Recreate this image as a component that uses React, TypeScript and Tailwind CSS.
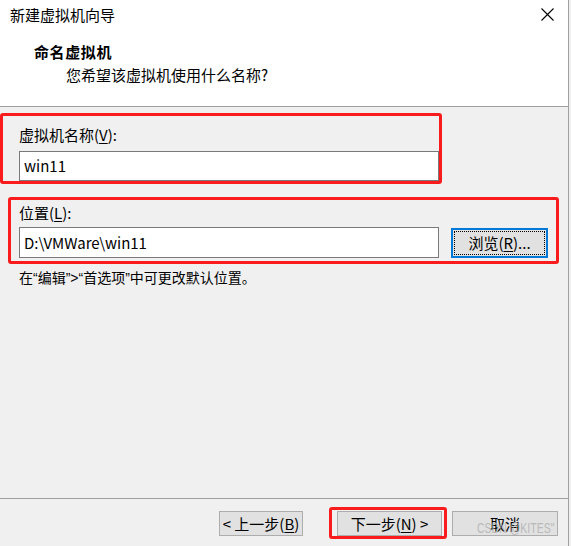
import React from 'react';

function Mnemonic({ children }: { children: React.ReactNode }) {
  return <span className="underline underline-offset-[2px] decoration-1">{children}</span>;
}

function Latin({ children }: { children: React.ReactNode }) {
  return <span className="font-['Liberation_Sans',sans-serif]">{children}</span>;
}

function WizardButton({ children }: { children: React.ReactNode }) {
  return (
    <button className="flex h-[25px] w-full items-center justify-center whitespace-nowrap border border-[#adadad] bg-[#e1e1e1] text-[15px] leading-[20px] text-black">
      {children}
    </button>
  );
}

export default function App() {
  return (
    <div className="flex h-[546px] w-[571px] overflow-hidden bg-[#f0f0f0] font-['Noto_Sans_CJK_SC',sans-serif] text-black">
      <div className="relative flex h-full w-[569px] flex-col border-r border-[#a0a0a0]">
        {/* header */}
        <header className="flex h-[107px] flex-col border-b border-[#a0a0a0] bg-white">
          <div className="flex items-start justify-between pl-[10px] pr-[14px] pt-[5px]">
            <span className="text-[15px] leading-[20px]">新建虚拟机向导</span>
            <svg width="13" height="13" viewBox="0 0 13 13" className="mt-[3px]">
              <path d="M0.5 0.5 L12.5 12.5 M12.5 0.5 L0.5 12.5" stroke="#000" strokeWidth="1.1" fill="none" />
            </svg>
          </div>
          <div className="pl-[34px] pt-[17px] text-[15px] font-bold leading-[20px] tracking-[0.6px]">命名虚拟机</div>
          <div className="pl-[66px] pt-[3px] text-[15px] leading-[20px]">您希望该虚拟机使用什么名称?</div>
        </header>

        {/* body */}
        <main className="flex flex-1 flex-col pl-[19px]">
          <label className="mt-[18px] text-[15px] leading-[20px]">
            虚拟机名称(<Mnemonic>V</Mnemonic>):
          </label>
          <div className="mt-[6px] flex h-[30px] w-[420px] items-center border border-[#7a7a7a] bg-white pl-[4px] text-[15px] leading-[20px]">
            win11
          </div>
          <label className="mt-[22px] text-[15px] leading-[20px]">
            位置(<Mnemonic>L</Mnemonic>):
          </label>
          <div className="mt-[4px] flex items-start gap-[12px]">
            <div className="flex h-[31px] w-[420px] items-center border border-[#7a7a7a] bg-white pl-[4px] text-[15px] leading-[20px]">
              D:\VMWare\win11
            </div>
            <button className="mt-[1px] flex h-[30px] w-[97px] items-center justify-center border-2 border-[#0078d7] bg-[#e1e1e1] p-[1px]">
              <span className="flex h-full w-full items-center justify-center border border-dotted border-black text-[15px] leading-[20px]">
                浏览(<Mnemonic>R</Mnemonic>)...
              </span>
            </button>
          </div>
          <p className="mt-[9px] text-[14px] leading-[20px]">
            在<Latin>“</Latin>编辑<Latin>”&gt;“</Latin>首选项<Latin>”</Latin>中可更改默认位置。
          </p>
        </main>

        {/* footer */}
        <footer className="flex h-[48px] items-start justify-end border-t border-[#a0a0a0] pr-[10px] pt-[12px]">
          <div className="w-[84px]">
            <WizardButton>&lt; 上一步(<Mnemonic>B</Mnemonic>)</WizardButton>
          </div>
          <div className="ml-[34px] w-[105px]">
            <WizardButton>下一步(<Mnemonic>N</Mnemonic>) &gt;</WizardButton>
          </div>
          <div className="relative ml-[10px] w-[106px]">
            <WizardButton>取消</WizardButton>
            <span className="pointer-events-none absolute left-[25px] top-[9px] origin-left scale-x-75 whitespace-nowrap font-['Liberation_Sans',sans-serif] text-[14px] leading-[16px] text-[#b4b4b4]/90">
              CSDN @KITES"
            </span>
          </div>
        </footer>

        {/* red annotation boxes */}
        <div className="absolute left-0 top-[113px] h-[71px] w-[442px] rounded-[3px] border-[3px] border-[#fa1c1c]" />
        <div className="absolute left-[8px] top-[197px] h-[67px] w-[551px] rounded-[3px] border-[3px] border-[#fa1c1c]" />
        <div className="absolute left-[329px] top-[507px] h-[32px] w-[118px] rounded-[3px] border-[3px] border-[#fa1c1c]" />
      </div>
      <div className="flex-1 bg-[#f0f0f0]" />
    </div>
  );
}
